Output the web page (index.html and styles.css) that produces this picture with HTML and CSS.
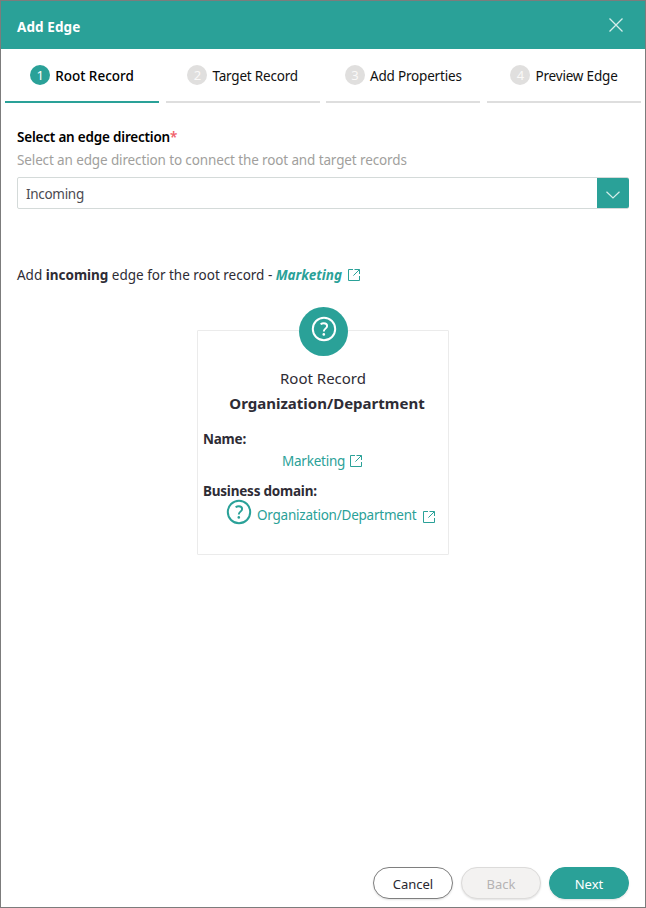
FILE: index.html
```html
<!DOCTYPE html>
<html lang="en">
<head>
<meta charset="utf-8">
<title>Add Edge</title>
<link rel="stylesheet" href="styles.css">
</head>
<body>
<svg class="defs" width="0" height="0" aria-hidden="true">
  <symbol id="open" viewBox="0 0 12 12"><path d="M5 .5H.5v11h11V7M6.5.5h5v4.5M11.3.7L5.4 6.6" fill="none" stroke="currentColor"/></symbol>
  <symbol id="help" viewBox="0 0 26 26"><circle cx="13" cy="13" r="11.2" fill="none" stroke="currentColor" stroke-width="2"/><path d="M9.6 8.2c1-.7 2-1 3.2-1 2 0 3.3 1 3.3 2.7 0 2.7-3.3 2.8-3.3 5.5" fill="none" stroke="currentColor" stroke-width="1.9"/><circle cx="12.8" cy="18.4" r="1.3" fill="currentColor"/></symbol>
</svg>
<main class="dialog">
  <header class="header">
    <h1 class="title">Add Edge</h1>
    <svg class="close" viewBox="0 0 14 14"><path d="M.5.5l13 13M13.5.5l-13 13"/></svg>
  </header>
  <nav class="steps">
    <div class="step active"><span class="num">1</span><span class="step-label">Root Record</span></div>
    <div class="step"><span class="num">2</span><span class="step-label">Target Record</span></div>
    <div class="step"><span class="num">3</span><span class="step-label">Add Properties</span></div>
    <div class="step"><span class="num">4</span><span class="step-label">Preview Edge</span></div>
  </nav>
  <section class="content">
    <div class="label"><span>Select an edge direction</span><span class="required">*</span></div>
    <div class="hint">Select an edge direction to connect the root and target records</div>
    <div class="select">
      <span class="value">Incoming</span>
      <span class="toggle"><svg viewBox="0 0 14 8"><path d="M.5.7L7 7 13.5.7"/></svg></span>
    </div>
    <p class="summary">Add <b>incoming</b> edge for the root record - <a class="record">Marketing</a><svg class="open"><use href="#open"/></svg></p>
    <article class="card">
      <div class="badge"><svg><use href="#help"/></svg></div>
      <div class="kind">Root Record</div>
      <div class="type">Organization/Department</div>
      <div class="field">Name:</div>
      <div class="link name-link"><span>Marketing</span><svg class="open"><use href="#open"/></svg></div>
      <div class="field domain">Business domain:</div>
      <div class="link domain-link"><svg class="help"><use href="#help"/></svg><span>Organization/Department</span><svg class="open"><use href="#open"/></svg></div>
    </article>
  </section>
  <footer class="footer">
    <button class="btn">Cancel</button>
    <button class="btn disabled" disabled>Back</button>
    <button class="btn primary">Next</button>
  </footer>
</main>
</body>
</html>
```

FILE: styles.css
```css
* { box-sizing: border-box; }
body { margin: 0; font: 13.5px/20px "Noto Sans", sans-serif; color: #2e2c35; }
.defs { position: absolute; }
.dialog { display: flex; flex-direction: column; height: 908px; border: 1px solid #7c7c7c; background: #fff; }
.header { display: flex; justify-content: space-between; align-items: center; height: 48px; padding: 0 22px 0 16px; background: #2aa198; color: #fff; }
.title { margin: 3px 0 0; font-size: 13.5px; line-height: 20px; font-weight: 700; letter-spacing: .1px; }
.close { width: 14px; height: 14px; fill: none; stroke: #d5eeeb; stroke-width: 1.3; }
.steps { display: flex; gap: 6.67px; padding: 0 4px; }
.step { display: flex; flex: 1; justify-content: center; gap: 5px; height: 54px; padding-top: 16px; border-bottom: 2px solid #dedede; color: #111; }
.step.active { border-color: #2aa198; }
.num { width: 20px; height: 20px; border-radius: 50%; background: #e0dfde; color: #faf9f8; text-align: center; font-size: 13px; line-height: 21px; }
.active .num { background: #2aa198; color: #fff; }
.step-label { margin-top: 1px; font-size: 13.5px; white-space: nowrap; letter-spacing: -.19px; }
.active .step-label { font-weight: 500; color: #000; letter-spacing: 0; }
.content { flex: 1; padding: 24px 16px 0; }
.label { color: #000; font-weight: 600; letter-spacing: -.2px; }
.required { color: #f1606a; }
.hint { margin-top: 3px; color: #a19f9d; letter-spacing: -.125px; }
.select { display: flex; height: 32px; margin-top: 7px; border: 1px solid #d4dad9; border-radius: 2px; }
.value { flex: 1; padding: 6px 8px; color: #4b4a51; letter-spacing: -.3px; }
.toggle { display: flex; width: 32px; margin: 0 -1px 0 0; align-items: center; justify-content: center; border-radius: 0 2px 2px 0; background: #2aa198; }
.toggle svg { width: 14px; height: 8px; margin-top: 3px; fill: none; stroke: #d5eeeb; stroke-width: 1.2; }
.summary { display: flex; align-items: center; height: 20px; margin: 56px 0 0; white-space: pre; letter-spacing: -.01px; }
.record { color: #2aa198; font-weight: 700; font-style: italic; }
.open { width: 12px; height: 12px; margin-left: 6px; color: #2aa198; flex: none; }
.card { display: flex; flex-direction: column; width: 252px; height: 225px; margin: 45px 0 0 180px; border: 1px solid #ebebeb; border-radius: 1px; }
.badge { display: flex; justify-content: center; width: 49px; height: 49px; margin: -24px 0 0 101px; padding-top: 9px; border-radius: 50%; background: #2aa198; color: #fff; }
.badge svg { width: 26px; height: 26px; }
.kind { margin-top: 10px; text-align: center; font-size: 15px; line-height: 24px; }
.type { margin: 1px 0 0 8px; text-align: center; font-size: 15px; line-height: 24px; font-weight: 700; }
.field { margin: 14px 0 0 5px; font-weight: 700; letter-spacing: -.22px; }
.link { display: flex; align-items: center; color: #2aa198; letter-spacing: -.23px; }
.name-link { margin: 2px 0 0 84px; height: 20px; }
.name-link .open { margin-left: 5px; }
.domain { margin-top: 10px; }
.domain-link { margin-left: 28px; height: 24px; }
.domain-link span { margin: 4px 1px 0 5px; }
.domain-link .open { margin-top: 7px; }
.help { width: 26px; height: 26px; margin-top: -3px; flex: none; }
.footer { display: flex; justify-content: flex-end; gap: 8px; padding: 0 16px 8px; }
.btn { width: 80px; height: 32px; padding: 2px 0 0; border: 1px solid #7f7f7f; border-radius: 16px; background: #fff; color: #292830; font: inherit; font-size: 13px; box-shadow: 0 1px 2px rgba(0,0,0,.12); }
.disabled { border-color: #dcdbda; background: #f3f2f1; color: #b5b3b4; }
.primary { border-color: #2aa198; background: #2aa198; color: #fff; }
```
